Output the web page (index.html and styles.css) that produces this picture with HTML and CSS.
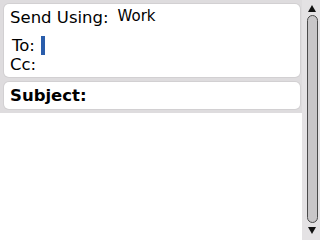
FILE: index.html
```html
<!DOCTYPE html>
<html>
<head>
<meta charset="utf-8">
<link rel="stylesheet" href="styles.css">
</head>
<body>
<div class="screen">
  <div class="main">
    <div class="header">
      <div class="card top">
        <div class="row send"><span class="label">Send Using:</span><span class="value">Work</span></div>
        <div class="row to"><span class="label">To:</span><span class="caret"></span></div>
        <div class="row cc"><span class="label">Cc:</span></div>
      </div>
      <div class="card subject">
        <span class="label bold">Subject:</span>
      </div>
    </div>
    <div class="body"></div>
  </div>
  <div class="scroll">
    <div class="arrow up"></div>
    <div class="track"></div>
    <div class="arrow down"></div>
  </div>
</div>
</body>
</html>
```
FILE: styles.css
```css
html, body {
  margin: 0;
  padding: 0;
  width: 320px;
  height: 240px;
  overflow: hidden;
  background: #fff;
  font-family: "DejaVu Sans", sans-serif;
  color: #000;
}
.screen {
  display: flex;
  width: 320px;
  height: 240px;
}
.main {
  width: 302px;
  display: flex;
  flex-direction: column;
}
.header {
  background: #dedcde;
  padding: 4px 2px 4px 4px;
  display: flex;
  flex-direction: column;
  gap: 5px;
}
.card {
  background: #fff;
  border-radius: 5px;
  box-shadow: 0 0 0 1px #d2d0d2;
}
.top {
  height: 73px;
  padding: 0 0 0 6px;
  box-sizing: border-box;
  display: flex;
  flex-direction: column;
}
.row {
  display: flex;
  align-items: flex-end;
}
.send {
  height: 23px;
  font-size: 16.5px;
}
.send .value {
  font-size: 15px;
  margin-left: 9px;
  position: relative;
  top: -2px;
}
.to {
  height: 29px;
  font-size: 16.5px;
  padding-left: 2px;
  align-items: center;
  padding-top: 8px;
  box-sizing: border-box;
}
.to .label {
  line-height: 16px;
}
.caret {
  display: inline-block;
  width: 4px;
  height: 19px;
  background: #2a5dab;
  margin-left: 6px;
}
.cc {
  font-size: 16.5px;
  line-height: 18px;
}
.subject {
  height: 27px;
  padding-left: 6px;
  box-sizing: border-box;
  display: flex;
  align-items: center;
  font-size: 16.5px;
}
.bold {
  font-weight: bold;
}
.body {
  flex: 1;
  background: #fff;
}
.scroll {
  width: 18px;
  background: #e4e2e4;
  display: flex;
  flex-direction: column;
  align-items: center;
  padding-left: 2px;
  box-sizing: border-box;
}
.arrow {
  width: 0;
  height: 0;
  border-left: 4px solid transparent;
  border-right: 4px solid transparent;
}
.up {
  border-bottom: 7px solid #111;
  margin-top: 5px;
}
.down {
  border-top: 7px solid #111;
  margin-top: 4px;
}
.track {
  margin-top: 3px;
  width: 9px;
  height: 206px;
  background: #c8c6c8;
  border: 1px solid #4a4a4a;
  border-radius: 6px;
}
```
